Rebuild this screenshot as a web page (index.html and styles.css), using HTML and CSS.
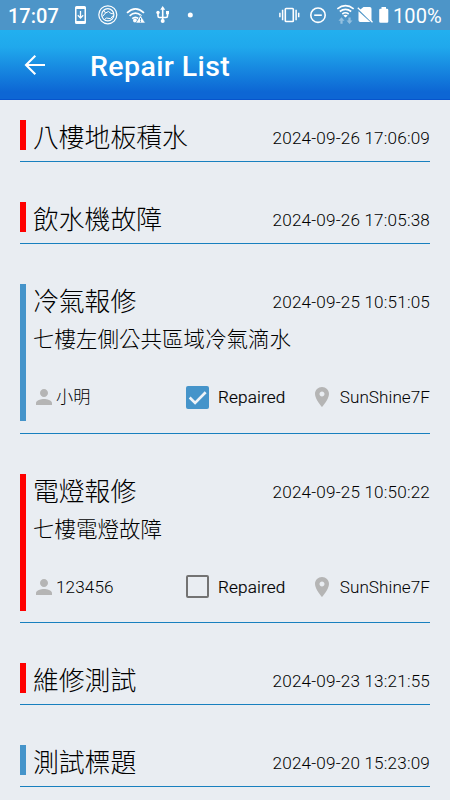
FILE: index.html
```html
<!DOCTYPE html>
<html lang="zh-Hant">
<head>
    <meta charset="UTF-8">
    <meta name="viewport" content="width=device-width, initial-scale=1.0">
    <title>Repair List</title>
    <link rel="stylesheet" href="styles.css">
</head>
<body>
    <!-- Status bar -->
    <div class="status-bar">
        <span class="clock">17:07</span>
        <svg class="status-left" width="126" height="30" viewBox="70 0 126 30" fill="none" stroke="#fff">
            <path fill="#fff" stroke="none" fill-rule="evenodd" d="M76.500 6h8q1.500 0 1.500 1.500v15q0 1.500-1.500 1.500h-8q-1.500 0-1.500-1.500v-15q0-1.500 1.500-1.500zM76.500 9v12h8V9z"/>
            <path stroke-width="1.300" d="M80.500 11v7M77.800 15.300l2.700 2.800 2.700-2.800"/>
            <circle cx="107.800" cy="14.800" r="9" stroke-width="1.200"/>
            <circle cx="107.800" cy="14.800" r="6.100" stroke-width="1.200"/>
            <path stroke-width="1" d="M104 10.500l1.500 2.500 3-1.500 2.500 2 2.500.3M102.500 16.500l3-3.500M104.500 19.500l2-1.500 4 .7 2.700-3.200"/>
            <path stroke-width="1.700" d="M127 12.800q8.500-8 17 0M129.600 15.800q5.900-5.400 11.800 0M132.200 18.700q3.300-2.800 6.300 0"/>
            <circle cx="135" cy="20.500" r="2" fill="#fff" stroke="none"/>
            <path fill="#fff" stroke="#4d95c8" stroke-width=".6" d="M140.500 15.300l4.800 7.700h-9.600z"/>
            <path stroke="#4d95c8" stroke-width="1" d="M140.500 18v2.500M140.500 21.200v1"/>
            <path stroke-width="1.600" d="M162.700 8v13M158 12v4q0 1.500 1.500 1.500h6.500q1.500 0 1.500-1.500v-4"/>
            <path fill="#fff" stroke="none" d="M160.200 9.800l2.500-3.800 2.500 3.800zM166 11h3v3.200h-3z"/>
            <circle cx="158" cy="12.500" r="1.700" fill="#fff" stroke="none"/>
            <circle cx="162.700" cy="21" r="2" fill="#fff" stroke="none"/>
            <circle cx="190.300" cy="15" r="2.500" fill="#fff" stroke="none"/>
        </svg>
        <svg class="status-right" width="114" height="30" viewBox="276 0 114 30" fill="none" stroke="#fff">
            <rect x="285.300" y="8.500" width="8" height="13" rx=".8" stroke-width="1.600"/>
            <path stroke-width="1.500" d="M282.600 9.700v10.500M296.100 9.700v10.500M279.900 12.700v4.500M298.700 12.700v4.500"/>
            <circle cx="318" cy="15.200" r="7.200" stroke-width="1.600"/>
            <path stroke-width="1.600" d="M314.200 15.200h7.600"/>
            <path stroke-width="1.600" d="M337.300 8.800q8.200-6.300 16.400 0M339.800 11.500q5.700-4.300 11.400 0M342.300 14q3.200-2.400 6.400 0"/>
            <path fill="#fff" stroke="none" d="M343.300 15.500q2.200-1.600 4.400 0l-2.200 2z"/>
            <path fill="#94c0df" stroke="none" d="M341.500 17.300l3 3.500h-1.900v3h-2.200v-3h-1.900zM349.500 24l3-3.500h-1.900v-3h-2.200v3h-1.900z"/>
            <path fill="#fff" stroke="none" d="M363.500 7h6.300q1.700 0 1.700 1.700v12.500L359.800 9.900zM358.500 11.200L370.300 22h-10.100q-1.700 0-1.700-1.700z"/>
            <path stroke-width="1.300" d="M357.800 7.800l14.700 14.500"/>
            <path fill="#fff" stroke="none" d="M381.500 7h4.500v1.700h1q1.300 0 1.300 1.300v11.500q0 1.300-1.300 1.300h-6.500q-1.300 0-1.300-1.300V10q0-1.300 1.300-1.300h1z"/>
        </svg>
        <span class="battery">100%</span>
    </div>

    <!-- Toolbar -->
    <div class="toolbar">
        <svg class="back" width="22" height="22" viewBox="0 0 22 22" fill="none" stroke="#fff" stroke-width="2.100">
            <path d="M21 11H2.500M11.300 1.700L2 11l9.300 9.300"/>
        </svg>
        <h1>Repair List</h1>
    </div>

    <!-- Shared icons -->
    <svg width="0" height="0" class="defs">
        <symbol id="person" viewBox="4 4 16 16"><path d="M12 12c2.210 0 4-1.790 4-4s-1.790-4-4-4-4 1.790-4 4 1.790 4 4 4zm0 2c-2.670 0-8 1.340-8 4v2h16v-2c0-2.660-5.330-4-8-4z"/></symbol>
        <symbol id="place" viewBox="5 2 14 20"><path d="M12 2C8.130 2 5 5.130 5 9c0 5.250 7 13 7 13s7-7.750 7-13c0-3.870-3.130-7-7-7zm0 9.500c-1.380 0-2.500-1.120-2.500-2.500s1.120-2.500 2.500-2.500 2.500 1.120 2.500 2.500-1.120 2.500-2.500 2.500z"/></symbol>
    </svg>

    <!-- Repair items -->
    <div class="list">
        <div class="item">
            <div class="row">
                <div class="bar"></div>
                <div class="content">
                    <div class="head"><span class="title">八樓地板積水</span><span class="date">2024-09-26 17:06:09</span></div>
                </div>
            </div>
        </div>
        <div class="item">
            <div class="row">
                <div class="bar"></div>
                <div class="content">
                    <div class="head"><span class="title">飲水機故障</span><span class="date">2024-09-26 17:05:38</span></div>
                </div>
            </div>
        </div>
        <div class="item">
            <div class="row">
                <div class="bar done"></div>
                <div class="content">
                    <div class="head"><span class="title">冷氣報修</span><span class="date">2024-09-25 10:51:05</span></div>
                    <div class="desc">七樓左側公共區域冷氣滴水</div>
                    <div class="foot">
                        <svg class="person"><use href="#person"/></svg>
                        <span class="name">小明</span>
                        <span class="check checked"><svg width="23" height="23" viewBox="0 0 22 22"><path d="M3.500 11l5.200 5.200L18.800 6" fill="none" stroke="#eff3f8" stroke-width="2.500"/></svg></span>
                        <span class="label">Repaired</span>
                        <svg class="place"><use href="#place"/></svg>
                        <span class="where">SunShine7F</span>
                    </div>
                </div>
            </div>
        </div>
        <div class="item">
            <div class="row">
                <div class="bar"></div>
                <div class="content">
                    <div class="head"><span class="title">電燈報修</span><span class="date">2024-09-25 10:50:22</span></div>
                    <div class="desc">七樓電燈故障</div>
                    <div class="foot">
                        <svg class="person"><use href="#person"/></svg>
                        <span class="name">123456</span>
                        <span class="check"></span>
                        <span class="label">Repaired</span>
                        <svg class="place"><use href="#place"/></svg>
                        <span class="where">SunShine7F</span>
                    </div>
                </div>
            </div>
        </div>
        <div class="item">
            <div class="row">
                <div class="bar"></div>
                <div class="content">
                    <div class="head"><span class="title">維修測試</span><span class="date">2024-09-23 13:21:55</span></div>
                </div>
            </div>
        </div>
        <div class="item">
            <div class="row">
                <div class="bar done"></div>
                <div class="content">
                    <div class="head"><span class="title">測試標題</span><span class="date">2024-09-20 15:23:09</span></div>
                </div>
            </div>
        </div>
    </div>
</body>
</html>
```
FILE: styles.css
```css
* {
    box-sizing: border-box;
}
body {
    margin: 0;
    height: 800px;
    overflow: hidden;
    background-color: #e9edf2;
    color: #000;
    font-family: Roboto, "Noto Sans CJK TC", sans-serif;
    font-weight: 300;
}
svg {
    display: block;
    flex: none;
}
.defs {
    height: 0;
}

/* Status bar */
.status-bar {
    display: flex;
    align-items: center;
    height: 30px;
    padding: 0 8px;
    background-color: #4d95c8;
    color: #fff;
    font-size: 20px;
    font-weight: 500;
}
.clock {
    width: 62px;
    padding-top: 1px;
}
.status-right {
    margin-left: auto;
}
.battery {
    width: 52px;
    padding: 1px 0 0 3px;
    font-weight: 400;
    letter-spacing: 0.1px;
    white-space: nowrap;
}

/* Toolbar */
.toolbar {
    display: flex;
    align-items: center;
    height: 70px;
    padding: 0 25px 0 24px;
    background: linear-gradient(#22b0ef 0%, #20a8ec 25%, #0d66d4 90%, #0d66d4 100%);
    border-bottom: 1px solid #0754cc;
}
h1 {
    margin: 4px 0 0 44px;
    color: #fff;
    font-size: 28.500px;
    font-weight: 500;
    letter-spacing: 0.4px;
}

/* List */
.item {
    padding: 20px;
}
.row {
    display: flex;
    gap: 7px;
    padding-bottom: 11.200px;
    border-bottom: 1px solid #1880bf;
}
.bar {
    width: 6px;
    background-color: #f00;
}
.bar.done {
    background-color: #4594ca;
}
.content {
    flex: 1;
}
.head {
    display: flex;
    justify-content: space-between;
    height: 30px;
}
.title {
    font-size: 25.800px;
    line-height: 37px;
}
.date {
    font-size: 17.140px;
    line-height: 37px;
    letter-spacing: 0.170px;
}
.desc {
    height: 50px;
    font-size: 21.500px;
    line-height: 52px;
}
.foot {
    display: flex;
    align-items: center;
    height: 57px;
    padding: 9px 0 0 3px;
    font-size: 17.140px;
    line-height: 24px;
}
.person {
    width: 16px;
    height: 16px;
    fill: #b5b5b5;
}
.name {
    width: 126px;
    padding-left: 4px;
    letter-spacing: 0.1px;
}
.check {
    width: 23px;
    height: 23px;
    margin-left: 8px;
    border: 2px solid #737373;
    border-radius: 2px;
}
.check.checked {
    border: 0;
    background-color: #4594ca;
}
.label {
    margin-left: 9px;
    letter-spacing: 0.150px;
    -webkit-text-stroke: 0.200px #000;
}
.place {
    width: 14px;
    height: 20px;
    margin-left: auto;
    fill: #b5b5b5;
}
.where {
    margin-left: 11px;
    letter-spacing: 0.050px;
}
```
